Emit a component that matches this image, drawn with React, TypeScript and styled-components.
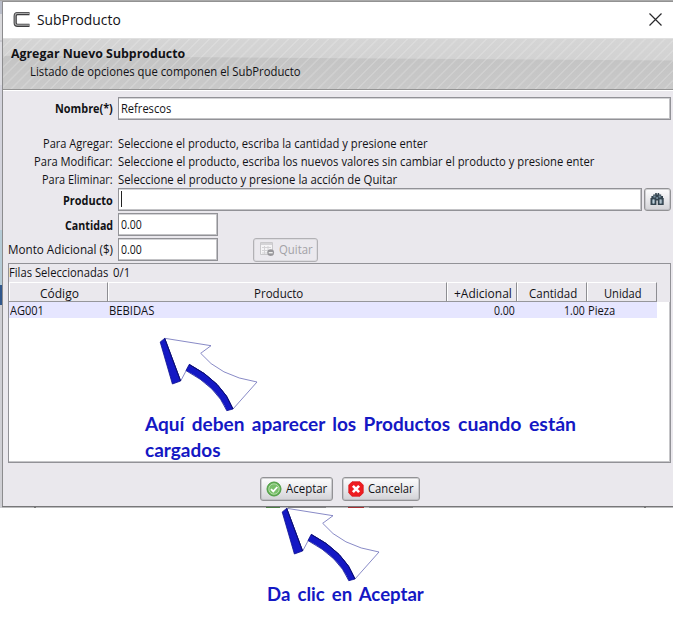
import React, { useLayoutEffect, useRef, useState } from "react";
import styled, { createGlobalStyle, css } from "styled-components";

const GlobalStyle = createGlobalStyle`
  * { box-sizing: border-box; }
  body { margin: 0; background: #fff; }
`;

const ui = '"Open Sans", "Noto Sans", sans-serif';
const note = 'Lato, "Open Sans", sans-serif';

/* ---------- text ---------- */

const TextBox = styled.span<{ $w: number; $size: number; $bold?: boolean; $color: string; $note?: boolean }>`
  display: block;
  flex: none;
  width: ${(p) => p.$w}px;
  height: ${(p) => Math.round(p.$size * 1.4)}px;
  line-height: ${(p) => Math.round(p.$size * 1.4)}px;
  font-family: ${(p) => (p.$note ? note : ui)};
  font-size: ${(p) => p.$size}px;
  font-weight: ${(p) => (p.$bold ? 700 : 400)};
  word-spacing: ${(p) => (p.$note ? 2.5 : 0)}px;
  color: ${(p) => p.$color};
  white-space: nowrap;
`;

const TextRun = styled.span`
  display: inline-block;
  transform-origin: 0 50%;
`;

interface TextProps {
  children: string;
  w: number;
  size?: number;
  bold?: boolean;
  color?: string;
  annotation?: boolean;
}

/* Condenses a line of text so that it takes exactly the given width. */
function Text({ children, w, size = 12, bold, color = "#121216", annotation }: TextProps) {
  const ref = useRef<HTMLSpanElement>(null);
  const [scale, setScale] = useState(1);
  useLayoutEffect(() => {
    if (ref.current && ref.current.offsetWidth) setScale(w / ref.current.offsetWidth);
  }, [w, children]);
  return (
    <TextBox $w={w} $size={size} $bold={bold} $color={color} $note={annotation}>
      <TextRun ref={ref} style={{ transform: `scaleX(${scale})` }}>
        {children}
      </TextRun>
    </TextBox>
  );
}

/* ---------- window ---------- */

const Page = styled.main`
  position: relative;
  width: 686px;
  height: 620px;
  overflow: hidden;
  background: #fff;
`;

const Desktop = styled.div`
  width: 673px;
  height: 508px;
  padding: 1px 0 0 2px;
  background: linear-gradient(#a9a9a9 0 1px, transparent 1px),
    linear-gradient(#b8bcc8 0 14px, #d9d9dc 14px 40px, #c9c9cf 40px 42px, #dddde2 42px 85px,
      #d3d3dc 85px 230px, #b5cbd6 230px 285px, #31588c 285px 305px, #cfcfd4 305px);
`;

const Dialog = styled.section`
  display: flex;
  flex-direction: column;
  width: 671px;
  height: 505px;
  border-top: 1px solid #929292;
  border-left: 1px solid #8c8c8e;
  background: #eae8ed;
`;

const TitleBar = styled.header`
  display: flex;
  flex: none;
  align-items: center;
  gap: 7px;
  height: 36px;
  padding: 0 11px 1px 10px;
  background: #fff;
  svg:last-child { margin-left: auto; }
`;

const Banner = styled.div`
  display: flex;
  flex: none;
  flex-direction: column;
  height: 53px;
  padding: 5px 0 0 8px;
  border-top: 1px solid #e0e0e0;
  border-bottom: 1px solid #fff;
  box-shadow: inset 0 -1px #939393;
  background: repeating-linear-gradient(135deg, transparent 0 5px, rgba(255, 255, 255, 0.17) 5.5px 6.5px, transparent 7px),
    linear-gradient(180.4deg, #d5d5d5 0, #d2d2d2 21px, #c4c4c4 22px, #cacaca 100%);
`;

const Subtitle = styled.div`
  padding: 1px 0 0 19px;
`;

const Form = styled.div`
  display: grid;
  flex: none;
  grid-template-columns: 110px 1fr;
  column-gap: 5px;
  padding: 5px 2px 0 0;
`;

const LabelCell = styled.div<{ $h: number }>`
  display: flex;
  align-items: center;
  justify-content: flex-end;
  height: ${(p) => p.$h}px;
`;

const ValueCell = styled(LabelCell)`
  justify-content: flex-start;
`;

const Gap = styled.div<{ $h: number }>`
  grid-column: 1 / -1;
  height: ${(p) => p.$h}px;
`;

const Field = styled.div<{ $w: number }>`
  display: flex;
  align-items: center;
  width: ${(p) => p.$w}px;
  height: 23px;
  padding-left: 2px;
  border: 1px solid #929297;
  box-shadow: inset -1px -1px #c3c3c6, inset 0 1px #d4d4d7;
  background: #fff;
`;

const Caret = styled.i`
  width: 1px;
  height: 16px;
  margin-bottom: 1px;
  background: #222;
`;

const Button = styled.button<{ $w: number; $disabled?: boolean }>`
  display: flex;
  flex: none;
  align-items: center;
  gap: 4px;
  width: ${(p) => p.$w}px;
  height: 24px;
  padding: 0 0 1px 5px;
  border: 1px solid #929295;
  border-radius: 3px;
  background: linear-gradient(#fdfdfd, #e9e9ec 50%, #d2d2d6);
  box-shadow: inset 0 0 0 1px rgba(175, 175, 180, 0.55);
  ${(p) =>
    p.$disabled &&
    css`
      border-color: #b2b1b5;
      background: #ebe9ee;
      box-shadow: inset 0 0 0 1px #dddce0;
    `}
`;

const SearchButton = styled(Button)`
  justify-content: center;
  height: 23px;
  margin-left: 2px;
  padding: 0 1px 1px 0;
`;

const RemoveButton = styled(Button)`
  margin-left: 35px;
`;

/* ---------- table ---------- */

const TablePanel = styled.div`
  display: flex;
  flex: none;
  flex-direction: column;
  width: 663px;
  height: 200px;
  margin: 1px 0 0 5px;
  border: 1px solid #929297;
  box-shadow: inset -1px -1px #c6c6c9;
  background: #fff;
`;

const Selection = styled.div`
  display: flex;
  flex: none;
  align-items: center;
  gap: 5px;
  height: 18px;
  padding-bottom: 1px;
  background: #eae8ed;
`;

const columns = "99px 339px 70px 70px 70px";

const HeaderRow = styled.div`
  display: grid;
  flex: none;
  grid-template: 20px / ${columns};
  height: 20px;
  background: #eae8ed;
`;

const HeaderCell = styled.div`
  display: flex;
  align-items: center;
  justify-content: center;
  padding: 2px 0 0 3px;
  border-top: 1px solid #fff;
  border-right: 1px solid #8d8d92;
  border-bottom: 1px solid #96969b;
  box-shadow: inset 1px 0 #fff;
`;

const DataRow = styled.div`
  display: grid;
  flex: none;
  grid-template: 16px / ${columns};
  width: 648px;
  height: 16px;
  background: #e6e6ff;
`;

const DataCell = styled.div<{ $end?: boolean }>`
  display: flex;
  align-items: center;
  justify-content: ${(p) => (p.$end ? "flex-end" : "flex-start")};
  padding: 0 ${(p) => (p.$end ? 2 : 1)}px 0 1px;
`;

const Actions = styled.footer`
  display: flex;
  gap: 9px;
  padding: 14px 0 0 257px;
`;

const Underlay = styled.div`
  display: flex;
  height: 2px;
  width: 671px;
  border-top: 1px solid #777779;
  background: #bcbcbe;
`;

const Smudge = styled.i<{ $gap: number; $w: number; $c: string }>`
  width: ${(p) => p.$w}px;
  margin-left: ${(p) => p.$gap}px;
  background: ${(p) => p.$c};
`;

/* ---------- annotations lying over the window ---------- */

const Overlay = styled.div<{ $x: number; $y: number }>`
  position: absolute;
  left: ${(p) => p.$x}px;
  top: ${(p) => p.$y}px;
`;

const NoteLine = styled.div`
  display: flex;
  gap: 8px;
  height: 26px;
`;

const blue = "#1418c4";

function Arrow() {
  return (
    <svg width="102" height="78" viewBox="158 336 102 78" display="block">
      <path
        d="M164.7 338.3 L211 345.7 L200.7 353.3 Q219 376 257 382 L233 409 Q220 380 189.3 364.3 L186.5 370 L180.7 381 Z"
        fill="#fff"
        stroke="#6a6cb8"
        strokeWidth=".8"
      />
      <g fill={blue} stroke="#0c1090" strokeWidth=".8" strokeLinejoin="round">
        <path d="M160.2 342 L164.7 338.4 L180.6 381 L172.4 384 Z" />
        <path d="M189.3 364.5 Q223 382 233 409 L226.8 410.7 Q217 387 186 370.6 Z" />
      </g>
      <path d="M164.7 338.4 L180.6 381 M189.3 364.5 Q223 382 233 409" fill="none" stroke="#0b0d70" strokeWidth="1" />
    </svg>
  );
}

function AppIcon() {
  return (
    <svg width="17" height="17" viewBox="0 0 17 17">
      <path d="M16.5 2.6H4.6Q2.2 2.6 2.2 5v7q0 2.3 2.4 2.3h11.9" fill="none" stroke="#3d3d3f" strokeWidth="3.2" />
      <path d="M16 2.4H4.5Q2.1 2.4 2.1 5v7q0 2.1 2.4 2.1H16" fill="none" stroke="#aaa" strokeWidth="1.1" />
    </svg>
  );
}

function CloseIcon() {
  return (
    <svg width="13" height="13" viewBox="0 0 13 13">
      <path d="M.5.5l12 12M12.5.5l-12 12" stroke="#29292c" strokeWidth="1.2" />
    </svg>
  );
}

function BinocularsIcon() {
  return (
    <svg width="14" height="14" viewBox="0 0 14 14">
      <path d="M1.4 4h1.8V2.4h2V1h1.6v1.4h.8V1h1.6v1.4h2V4H13v2h.7v7H7.8V8.5H6.4V13H.5V6h.9z" fill="#34444f" />
      <path d="M2 7.5h3v4H2zM9.2 7.5h3v4h-3z" fill="#8298a6" />
      <path d="M3 7.5h1v4H3zM10.2 7.5h1v4h-1z" fill="#c0cdd5" />
      <path d="M3.5 3.5h2v2h-2zM8.7 3.5h2v2h-2zM6.3 5h1.6v2H6.3z" fill="#778e9d" />
    </svg>
  );
}

function RemoveRowIcon() {
  return (
    <svg width="16" height="16" viewBox="0 0 16 16">
      <path d="M1.5 1.5h12v12h-12z" fill="#f5f4f6" stroke="#c9c8cb" />
      <path d="M2 2h11v2H2z" fill="#d4d3d6" />
      <path d="M3 6.5h9M3 9.5h7M3 12h6M5.5 5v8M9 5v8" stroke="#d3d2d5" fill="none" />
      <circle cx="11.7" cy="11.7" r="3.4" fill="#98979b" />
      <path d="M9.7 11.7h4" stroke="#eee" strokeWidth="1.4" />
    </svg>
  );
}

function AcceptIcon() {
  return (
    <svg width="16" height="16" viewBox="0 0 16 16">
      <circle cx="8" cy="8" r="7" fill="#66b257" stroke="#4a9a40" />
      <circle cx="8" cy="8" r="5.2" fill="#79bf6b" stroke="#c4e5bb" strokeWidth=".8" />
      <path d="M5 8.1l2.3 2.3L11.3 6" fill="none" stroke="#fff" strokeWidth="1.8" />
    </svg>
  );
}

function CancelIcon() {
  return (
    <svg width="16" height="16" viewBox="0 0 16 16">
      <path d="M4 .8h8L15.2 4v8L12 15.2H4L.8 12V4z" fill="#ee1c20" stroke="#d5161a" strokeWidth=".8" />
      <path d="M4.9 4.9l6.2 6.2M11.1 4.9l-6.2 6.2" stroke="#fff" strokeWidth="2.7" />
    </svg>
  );
}

/* ---------- data ---------- */

const help = [
  { label: "Para Agregar:", lw: 70, text: "Seleccione el producto, escriba la cantidad y presione enter", tw: 310 },
  { label: "Para Modificar:", lw: 79, text: "Seleccione el producto, escriba los nuevos valores sin cambiar el producto y presione enter", tw: 476 },
  { label: "Para Eliminar:", lw: 71, text: "Seleccione el producto y presione la acción de Quitar", tw: 279 },
];

const headers = [
  { text: "Código", w: 39 },
  { text: "Producto", w: 49 },
  { text: "+Adicional", w: 58 },
  { text: "Cantidad", w: 48 },
  { text: "Unidad", w: 38 },
];

const row = [
  { text: "AG001", w: 34 },
  { text: "BEBIDAS", w: 45 },
  { text: "0.00", w: 21, end: true },
  { text: "1.00", w: 21, end: true },
  { text: "Pieza", w: 27 },
];

export default function App() {
  return (
    <Page>
      <GlobalStyle />
      <Desktop>
        <Dialog>
          <TitleBar>
            <AppIcon />
            <Text w={84} size={15}>SubProducto</Text>
            <CloseIcon />
          </TitleBar>
          <Banner>
            <Text w={174} size={13} bold>Agregar Nuevo Subproducto</Text>
            <Subtitle>
              <Text w={271}>Listado de opciones que componen el SubProducto</Text>
            </Subtitle>
          </Banner>
          <Form>
            <LabelCell $h={24}><Text w={58} bold>Nombre(*)</Text></LabelCell>
            <ValueCell $h={24}><Field $w={553}><Text w={50}>Refrescos</Text></Field></ValueCell>
            <Gap $h={14} />
            {help.map((h) => (
              <React.Fragment key={h.label}>
                <LabelCell $h={18}><Text w={h.lw}>{h.label}</Text></LabelCell>
                <ValueCell $h={18}><Text w={h.tw}>{h.text}</Text></ValueCell>
              </React.Fragment>
            ))}
            <LabelCell $h={25}><Text w={50} bold>Producto</Text></LabelCell>
            <ValueCell $h={23}>
              <Field $w={524}><Caret /></Field>
              <SearchButton $w={27} aria-label="Buscar"><BinocularsIcon /></SearchButton>
            </ValueCell>
            <LabelCell $h={24}><Text w={48} bold>Cantidad</Text></LabelCell>
            <ValueCell $h={23}><Field $w={100}><Text w={21}>0.00</Text></Field></ValueCell>
            <LabelCell $h={25}><Text w={105}>Monto Adicional ($)</Text></LabelCell>
            <ValueCell $h={25}>
              <Field $w={100}><Text w={21}>0.00</Text></Field>
              <RemoveButton $w={65} $disabled>
                <RemoveRowIcon />
                <Text w={34} color="#a3a2a6">Quitar</Text>
              </RemoveButton>
            </ValueCell>
          </Form>
          <TablePanel>
            <Selection>
              <Text w={99}>Filas Seleccionadas</Text>
              <Text w={17}>0/1</Text>
            </Selection>
            <HeaderRow>
              {headers.map((h) => <HeaderCell key={h.text}><Text w={h.w}>{h.text}</Text></HeaderCell>)}
            </HeaderRow>
            <DataRow>
              {row.map((c) => <DataCell key={c.text} $end={c.end}><Text w={c.w}>{c.text}</Text></DataCell>)}
            </DataRow>
          </TablePanel>
          <Actions>
            <Button $w={73}><AcceptIcon /><Text w={41}>Aceptar</Text></Button>
            <Button $w={78}><CancelIcon /><Text w={46}>Cancelar</Text></Button>
          </Actions>
        </Dialog>
        <Underlay>
          <Smudge $gap={32} $w={2} $c="#777" />
          <Smudge $gap={230} $w={14} $c="#4c7f45" />
          <Smudge $gap={8} $w={38} $c="#858587" />
          <Smudge $gap={22} $w={16} $c="#a73034" />
          <Smudge $gap={5} $w={44} $c="#858587" />
          <Smudge $gap={231} $w={2} $c="#777" />
        </Underlay>
      </Desktop>

      <Overlay $x={158} $y={336}><Arrow /></Overlay>
      <Overlay $x={279.5} $y={506}><Arrow /></Overlay>
      <Overlay $x={145} $y={412}>
        <NoteLine>
          <Text w={305} size={18} bold annotation color={blue}>Aquí deben aparecer los Productos</Text>
          <Text w={118} size={18} bold annotation color={blue}>cuando están</Text>
        </NoteLine>
        <NoteLine>
          <Text w={76} size={18} bold annotation color={blue}>cargados</Text>
        </NoteLine>
      </Overlay>
      <Overlay $x={267} $y={582}>
        <Text w={157} size={18} bold annotation color={blue}>Da clic en Aceptar</Text>
      </Overlay>
    </Page>
  );
}
